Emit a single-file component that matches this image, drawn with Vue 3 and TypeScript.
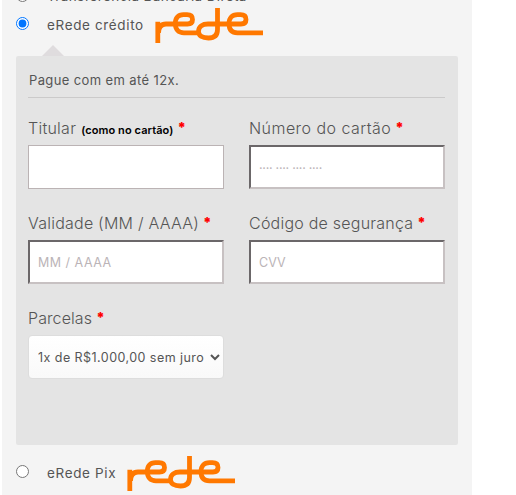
<script setup lang="ts">
import { ref } from 'vue'

const method = ref<string>('credit')
const installments = ref<string>('1')
const logoPath =
  'M2.800 35V13.700M3.500 25C3.500 19 6 16 11 16H32.500C36 16 37.500 14.300 37.500 11.500C37.500 8 35.500 6.700 32 6.700H28.500C23 6.700 20.300 10 20.300 15.500C20.300 21.500 23.500 24.800 29 24.800H44M62.500 0V21.500C62.500 27 59.500 30 53.500 30C47 30 43.500 27.500 43.500 23.500C43.500 18.500 47.500 16 53 16H86C89.800 16 91 14.300 91 11.500C91 8 89 6.700 85.500 6.700H82.500C77 6.700 74 10 74 15.500C74 21.500 77 24.800 82.500 24.800H108'
</script>

<template>
  <main class="payment">
    <label class="method clipped">
      <input v-model="method" type="radio" value="transfer" />
      <span class="transfer">Transferência Bancária Direta</span>
    </label>
    <label class="method credit">
      <input v-model="method" type="radio" value="credit" />
      <span class="credit-name">eRede crédito</span>
      <svg class="logo" viewBox="0 0 108 35"><path :d="logoPath" /></svg>
    </label>
    <section class="box">
      <p class="notice"><span>Pague com em até 12x.</span></p>
      <div class="fields">
        <div class="field">
          <label for="holder"><span class="t-holder">Titular</span> <small>(como no cartão)</small> <b>*</b></label>
          <input id="holder" class="plain" type="text" />
        </div>
        <div class="field">
          <label for="number"><span class="t-number">Número do cartão</span> <b>*</b></label>
          <input id="number" class="dots" type="text" placeholder=".... .... .... ...." />
        </div>
        <div class="field">
          <label for="expiry"><span class="t-expiry">Validade (MM / AAAA)</span> <b>*</b></label>
          <input id="expiry" class="date" type="text" placeholder="MM / AAAA" />
        </div>
        <div class="field">
          <label for="cvv"><span class="t-cvv">Código de segurança</span> <b>*</b></label>
          <input id="cvv" type="text" placeholder="CVV" />
        </div>
        <div class="field">
          <label for="parcels"><span class="t-parcels">Parcelas</span> <b>*</b></label>
          <select id="parcels" v-model="installments">
            <option value="1">1x de R$1.000,00 sem juros</option>
          </select>
        </div>
      </div>
    </section>
    <label class="method pix">
      <input v-model="method" type="radio" value="pix" />
      <span class="pix-name">eRede Pix</span>
      <svg class="logo" viewBox="0 0 108 35"><path :d="logoPath" /></svg>
    </label>
  </main>
</template>

<style>
body {
  background: #fff;
  overflow: hidden;
}
</style>

<style scoped>
.payment {
  box-sizing: border-box;
  width: 470px;
  height: 495px;
  margin-left: 2px;
  padding: 0 14px;
  overflow: hidden;
  background: #f4f4f4;
  color: #555;
  font-family: Inter, "Open Sans", sans-serif;
}
.method {
  display: flex;
  align-items: center;
  font-size: 13.5px;
}
.method input {
  width: 13px;
  height: 13px;
  margin: 0 18px 0 0;
  accent-color: #0075ff;
}
.clipped {
  height: 16px;
  margin-top: -12px;
}
.clipped input {
  margin-top: -2px;
}
.credit {
  height: 52px;
  padding-bottom: 9px;
  box-sizing: border-box;
}
.credit input {
  margin-top: -4px;
}
.pix input {
  margin-top: -5px;
}
.credit-name, .pix-name {
  padding-bottom: 2px;
}
.credit-name { letter-spacing: 0.64px; }
.pix-name { letter-spacing: 0.65px; }
.transfer { letter-spacing: 0.38px; }
.logo {
  width: 108px;
  height: 35px;
  margin-left: 11px;
}
.logo path {
  fill: none;
  stroke: #ff7800;
  stroke-width: 4.8;
  stroke-linejoin: round;
}
.box {
  position: relative;
  box-sizing: border-box;
  height: 389px;
  padding: 13px 13px 0 12px;
  border-radius: 2px;
  background: #e4e4e4;
}
.box::before {
  content: "";
  position: absolute;
  left: 26px;
  top: -11px;
  border: 11px solid transparent;
  border-top: 0;
  border-bottom-color: #dfdcde;
}
.notice {
  box-sizing: border-box;
  height: 29px;
  margin: 0 0 20px;
  padding-left: 1px;
  border-bottom: 1px solid #cbcaca;
  font-size: 13px;
  line-height: 23px;
  letter-spacing: 0.38px;
}
.fields {
  display: grid;
  grid-template-columns: 196px 196px;
  column-gap: 25px;
  row-gap: 24px;
}
.field {
  height: 71px;
}
.field label {
  display: flex;
  height: 27px;
  font-size: 16px;
  font-weight: 350;
  line-height: 21px;
  white-space: nowrap;
}
.t-holder { letter-spacing: 0.25px; }
.t-number { letter-spacing: 0.45px; }
.t-expiry { letter-spacing: 0.23px; }
.t-cvv { letter-spacing: 0.23px; }
.t-parcels { letter-spacing: 0.1px; }
.field small {
  margin-left: 5px;
  color: #000;
  font-size: 11px;
  font-weight: 600;
  line-height: 24px;
  letter-spacing: 0.08px;
}
.field b {
  margin-left: 4px;
  color: #f00;
  font-size: 14px;
  font-weight: 900;
  line-height: 20px;
}
.field input, .field select {
  display: block;
  box-sizing: border-box;
  width: 196px;
  height: 44px;
  padding: 0 8px;
  border: 2px solid;
  border-color: #6b6769 #c7c1c2 #c7c1c2 #6b6769;
  border-radius: 0;
  background: #fff;
  color: #555;
  font: 12.5px Inter, sans-serif;
}
.field input::placeholder {
  color: #bbb4b7;
  opacity: 1;
}
.field input.dots {
  padding-bottom: 5px;
  letter-spacing: -0.27px;
}
.field input.date {
  letter-spacing: 0.5px;
}
.field input.plain {
  border: 1px solid #bbb3b4;
}
.field select {
  padding: 0 3px 0 5px;
  border: 1px solid #ddd;
  border-radius: 4px;
  background: linear-gradient(#fff, #f9f9f9);
  letter-spacing: 0.45px;
}
.pix {
  height: 57px;
}
</style>
